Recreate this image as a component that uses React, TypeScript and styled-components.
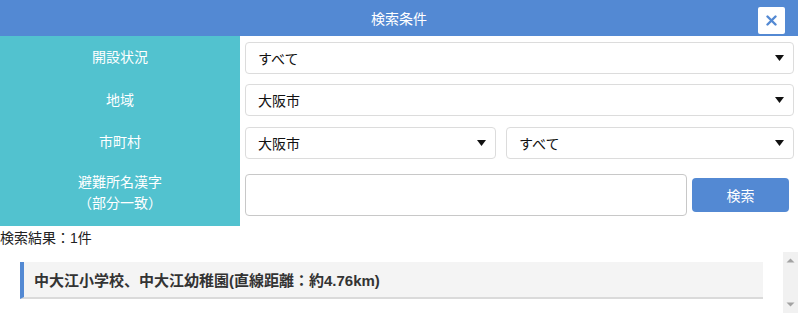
import React from 'react'
import { styled, createGlobalStyle } from 'styled-components'

const GlobalStyle = createGlobalStyle`
    html, body {
        margin: 0;
        padding: 0;
        background: #fff;
        font-family: "Liberation Sans", "Noto Sans CJK JP", sans-serif;
        font-size: 14px;
        color: #222;
    }
`

const Caret = () => (
    <svg width="9" height="6" viewBox="0 0 9 6">
        <path d="M0 0H9L4.5 6Z" fill="#111" />
    </svg>
)

const ScrollArrow = ({ down }: { down?: boolean }) => (
    <svg width="15" height="17" viewBox="0 0 15 17">
        <path d={down ? 'M3.5 6.5H11.5L7.5 10.5Z' : 'M3.5 10.5H11.5L7.5 6.5Z'} fill="#a3a3a3" />
    </svg>
)

const App = () => {
    return (
        <>
            <GlobalStyle />
            <Header>
                <span>検索条件</span>
                <CloseButton aria-label="close">
                    <svg width="11" height="11" viewBox="0 0 11 11">
                        <path d="M1.5 1.5L9.5 9.5M9.5 1.5L1.5 9.5" stroke="#5389d3" strokeWidth="2.4" strokeLinecap="round" />
                    </svg>
                </CloseButton>
            </Header>
            <Form>
                <Label>開設状況</Label>
                <Field>
                    <Select><span>すべて</span><Caret /></Select>
                </Field>
                <Label>地域</Label>
                <Field>
                    <Select><span>大阪市</span><Caret /></Select>
                </Field>
                <Label>市町村</Label>
                <Field $gap={10}>
                    <Select $width={251}><span>大阪市</span><Caret /></Select>
                    <Select><span>すべて</span><Caret /></Select>
                </Field>
                <Label $tall>避難所名漢字<br />（部分一致）</Label>
                <Field $tall>
                    <TextInput type="text" />
                    <SearchButton>検索</SearchButton>
                </Field>
            </Form>
            <ResultCount>検索結果：1件</ResultCount>
            <ResultPane>
                <ResultList>
                    <ResultItem>中大江小学校、中大江幼稚園(直線距離：約4.76km)</ResultItem>
                </ResultList>
                <ScrollTrack>
                    <ScrollArrow />
                    <ScrollArrow down />
                </ScrollTrack>
            </ResultPane>
        </>
    )
}

const Header = styled.header`
    position: relative;
    height: 36px;
    background: #5389d3;
    color: #fff;
    display: flex;
    align-items: center;
    justify-content: center;
    font-size: 14px;
`

const CloseButton = styled.button`
    position: absolute;
    right: 13px;
    top: 7px;
    width: 27px;
    height: 27px;
    padding: 0;
    border: none;
    border-radius: 2px;
    background: #fff;
    display: flex;
    align-items: center;
    justify-content: center;
`

const Form = styled.div`
    display: grid;
    grid-template-columns: 240px 1fr;
    grid-template-rows: 43px 42px 43px 62px;
`

const Label = styled.div<{ $tall?: boolean }>`
    background: #52c2cf;
    color: #fff;
    display: flex;
    align-items: center;
    justify-content: center;
    text-align: center;
    line-height: 21px;
    padding-bottom: ${p => (p.$tall ? '4px' : '0')};
`

const Field = styled.div<{ $gap?: number; $tall?: boolean }>`
    display: flex;
    align-items: ${p => (p.$tall ? 'flex-start' : 'center')};
    gap: ${p => p.$gap ?? 5}px;
    padding: ${p => (p.$tall ? '10px 9px 0 5px' : '0 4px 0 5px')};
`

const Select = styled.div<{ $width?: number }>`
    flex: ${p => (p.$width ? `0 0 ${p.$width}px` : '1 1 0')};
    height: 32px;
    box-sizing: border-box;
    border: 1px solid #dcdcdc;
    border-radius: 4px;
    background: #fff;
    display: flex;
    align-items: center;
    justify-content: space-between;
    padding: 0 9px 0 12px;
    color: #111;
`

const TextInput = styled.input`
    flex: 1 1 auto;
    min-width: 0;
    height: 42px;
    box-sizing: border-box;
    border: 1px solid #c8c8c8;
    border-radius: 4px;
    margin: 0;
    padding: 0 10px;
    font: inherit;
`

const SearchButton = styled.button`
    flex: 0 0 97px;
    height: 34px;
    margin-top: 4px;
    border: none;
    border-radius: 4px;
    background: #5389d3;
    color: #fff;
    font-family: inherit;
    font-size: 14px;
`

const ResultCount = styled.div`
    height: 26px;
    line-height: 24px;
    color: #222;
`

const ResultPane = styled.div`
    display: flex;
    height: 61px;
`

const ResultList = styled.div`
    flex: 1;
    overflow: hidden;
    padding: 10px 20px 0 20px;
`

const ScrollTrack = styled.div`
    flex: 0 0 15px;
    background: #f1f1f1;
    display: flex;
    flex-direction: column;
    justify-content: space-between;
`

const ResultItem = styled.div`
    background: #f4f4f4;
    border-left: 4px solid #5389d3;
    border-bottom: 2px solid #dadada;
    height: 35px;
    display: flex;
    align-items: center;
    padding-left: 10px;
    font-size: 15px;
    font-weight: bold;
    color: #333;
`

export default App
